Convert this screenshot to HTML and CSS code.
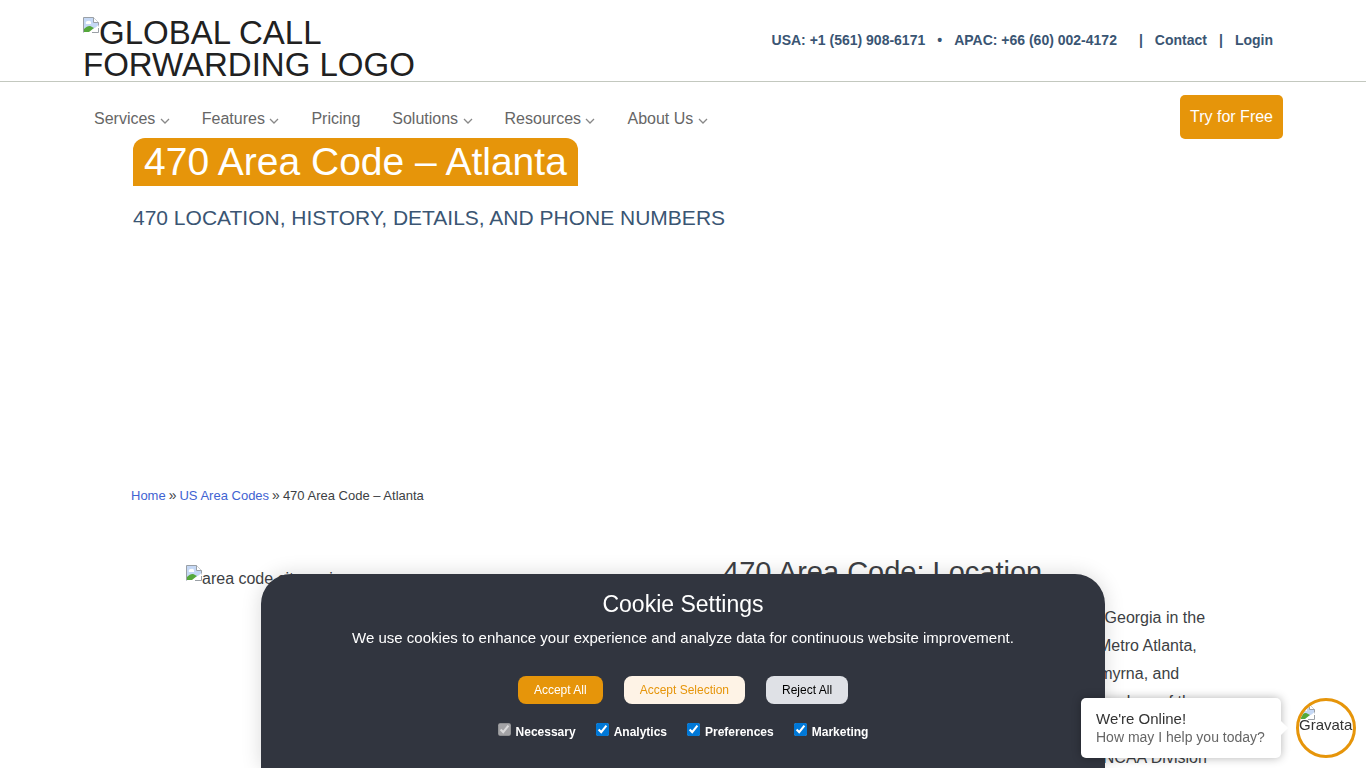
FILE: index.html
```html
<!DOCTYPE html>
<html lang="en">
<head>
<meta charset="utf-8">
<meta name="viewport" content="width=device-width, initial-scale=1">
<title>470 Area Code – Atlanta</title>
<link rel="stylesheet" href="styles.css">
</head>
<body>
<svg class="defs" width="0" height="0" aria-hidden="true">
  <symbol id="broken" viewBox="0 0 16 16">
    <path d="M.5 15.5V.5h10l5 5v4" fill="#c5d8f5" stroke="#9aa0a6"/>
    <path d="M10.500.5v5h5" fill="#fff" stroke="#9aa0a6"/>
    <path d="M3 7a2 2 0 0 1 2-3 2 2 0 0 1 3 2v1z" fill="#fff"/>
    <path d="M1 15v-3c3-3 6-4 8-2l2 1-5 4z" fill="#55a83b"/>
    <path d="M7 15.500 15.500 8v7.500z" fill="#fff"/>
    <path d="M9 15.500h6.500V11" fill="none" stroke="#9aa0a6"/>
  </symbol>
  <symbol id="chevron" viewBox="0 0 10 6">
    <path d="m1 1 4 4 4-4" fill="none" stroke="currentColor" stroke-width="1.300"/>
  </symbol>
</svg>
<header>
  <div class="topbar">
    <a class="logo" href="#"><svg class="broken"><use href="#broken"/></svg>Global Call Forwarding Logo</a>
    <div class="contacts">
      <a href="#">USA: +1 (561) 908-6171</a><span class="dot">•</span><a href="#">APAC: +66 (60) 002-4172</a><span class="bar wide">|</span><a href="#">Contact</a><span class="bar">|</span><a href="#">Login</a>
    </div>
  </div>
  <nav class="nav">
    <div class="menu">
      <a href="#">Services <svg><use href="#chevron"/></svg></a>
      <a href="#">Features <svg><use href="#chevron"/></svg></a>
      <a href="#">Pricing</a>
      <a href="#">Solutions <svg><use href="#chevron"/></svg></a>
      <a href="#">Resources <svg><use href="#chevron"/></svg></a>
      <a href="#">About Us <svg><use href="#chevron"/></svg></a>
    </div>
    <a class="try" href="#">Try for Free</a>
  </nav>
</header>
<main>
  <section class="hero">
    <h1>470 Area Code – Atlanta</h1>
    <p>470 Location, History, Details, and Phone Numbers</p>
  </section>
  <nav class="crumbs" aria-label="Breadcrumb"><a href="#">Home</a><span>»</span><a href="#">US Area Codes</a><span>»</span>470 Area Code – Atlanta</nav>
  <section class="info">
    <div class="figure"><svg class="broken"><use href="#broken"/></svg>area code city region</div>
    <div class="article">
      <h2>470 Area Code: Location</h2>
      <p>The 470 area code mainly serves the northern part of Georgia in the<br>
      United States. This area code today covers all of the Metro Atlanta,<br>
      and includes the Roswell, Sandy Springs, Marietta, Smyrna, and<br>
      Alpharetta. It is one of the four main area codes and overlays of the<br>
      city of Atlanta, with many businesses and teams<br>
      and universities that are competing in most of the top NCAA Division</p>
    </div>
  </section>
</main>
<section class="cookie" aria-labelledby="cookie-title">
  <h2 id="cookie-title">Cookie Settings</h2>
  <p>We use cookies to enhance your experience and analyze data for continuous website improvement.</p>
  <div class="actions">
    <button class="accept" type="button">Accept All</button>
    <button class="selection" type="button">Accept Selection</button>
    <button class="reject" type="button">Reject All</button>
  </div>
  <div class="options">
    <label><input type="checkbox" checked disabled>Necessary</label>
    <label><input type="checkbox" checked>Analytics</label>
    <label><input type="checkbox" checked>Preferences</label>
    <label><input type="checkbox" checked>Marketing</label>
  </div>
</section>
<aside class="chat">
  <div class="bubble"><strong>We're Online!</strong><span>How may I help you today?</span></div>
  <button class="avatar" type="button"><svg class="broken"><use href="#broken"/></svg><span>Gravatar</span></button>
</aside>
</body>
</html>
```
FILE: styles.css
```css
* { box-sizing: border-box; }
body {
  margin: 0;
  font: 16px/28px "Liberation Sans", Arial, sans-serif;
  color: #3d3f44;
  background: #fff;
  overflow-x: hidden;
}
h1, h2, p { margin: 0; font-weight: 400; }
a { text-decoration: none; color: inherit; }
.defs { position: absolute; }
.broken { width: 16px; height: 16px; flex: none; vertical-align: top; }

.topbar {
  display: flex;
  justify-content: space-between;
  min-height: 82px;
  padding: 17px 93px 0 83px;
  border-bottom: 1px solid #c3c8bf;
}
.logo {
  width: 340px;
  font-size: 33px;
  line-height: 32px;
  text-transform: uppercase;
  color: #212121;
}
.contacts {
  display: flex;
  align-items: center;
  height: 46px;
  font-size: 14px;
  font-weight: 700;
  color: #3a5573;
}
.contacts .dot { margin: 0 12px; }
.contacts .bar { margin: 0 12px; }
.contacts .bar.wide { margin-left: 22px; }

.nav {
  display: flex;
  justify-content: space-between;
  height: 56px;
  padding: 13px 83px 0 94px;
}
.menu { display: flex; gap: 32px; line-height: 47px; color: #666; }
.menu svg { width: 10px; height: 6px; color: #888; }
.try {
  height: 44px;
  padding: 0 10px;
  border-radius: 5px;
  line-height: 44px;
  color: #fff;
  background: #e6950a;
}

.hero {
  min-height: 345px;
  padding: 0 133px;
}
.hero h1 {
  display: inline-block;
  padding: 0 11px;
  border-radius: 12px 12px 0 0;
  font-size: 39px;
  line-height: 48px;
  vertical-align: top;
  color: #fff;
  background: #e6950a;
}
.hero p {
  margin-top: 18px;
  font-size: 21px;
  text-transform: uppercase;
  color: #3a5573;
}
.crumbs {
  padding: 0 131px;
  font-size: 13px;
  line-height: 24px;
}
.crumbs a { color: #3f63d2; }
.crumbs span { margin: 0 3px; font-size: 14px; }

.info {
  display: grid;
  grid-template-columns: 537px 1fr;
  padding: 49px 133px 0 186px;
}
.figure { margin-top: 8px; }
.article h2 { font-size: 29px; line-height: 30px; }
.article p { margin-top: 17px; white-space: nowrap; }

.cookie {
  position: fixed;
  bottom: 0;
  left: 50%;
  width: 844px;
  max-width: 100%;
  padding: 16px 20px 24px;
  border-radius: 30px 30px 0 0;
  text-align: center;
  color: #fff;
  background: #31353f;
  box-shadow: 0 0 20px rgba(0, 0, 0, .15);
  transform: translateX(-50%);
}
.cookie h2 { font-size: 23px; line-height: 28px; }
.cookie p { margin-top: 10px; font-size: 15px; line-height: 20px; }
.actions { display: flex; justify-content: center; gap: 21px; margin-top: 28px; }
.actions button {
  height: 28px;
  padding: 0 16px;
  border: 0;
  border-radius: 8px;
  font: 12px "Liberation Sans", Arial, sans-serif;
}
.actions .accept { color: #fff; background: #e6950a; }
.actions .selection { color: #e6950a; background: #fef3e6; }
.actions .reject { color: #000; background: #dfe1e6; }
.options {
  display: flex;
  justify-content: center;
  gap: 20px;
  margin-top: 16px;
  font-size: 12px;
  font-weight: 700;
  line-height: 24px;
}
.options label { display: flex; }
.options input { width: 13px; height: 13px; margin: 3px 5px 0 0; accent-color: #0078d7; }

.chat {
  position: fixed;
  right: 10px;
  bottom: 10px;
  display: flex;
  gap: 15px;
}
.bubble {
  position: relative;
  width: 200px;
  padding: 12px 15px;
  border-radius: 5px;
  line-height: 18px;
  background: #fff;
  box-shadow: 0 0 10px rgba(0, 0, 0, .3);
}
.bubble::after {
  content: "";
  position: absolute;
  top: 25px;
  right: -5px;
  width: 10px;
  height: 10px;
  background: #fff;
  transform: rotate(45deg);
}
.bubble strong { display: block; font-size: 15px; font-weight: 400; color: #333; }
.bubble span { display: block; font-size: 14px; white-space: nowrap; color: #666; }
.avatar {
  display: flex;
  flex-direction: column;
  justify-content: flex-start;
  width: 60px;
  height: 60px;
  padding: 3px 0 0;
  border: 3px solid #e6950a;
  border-radius: 50%;
  overflow: hidden;
  font: 15px/16px "Liberation Sans", Arial, sans-serif;
  text-align: left;
  color: #333;
  background: #fff;
}
.avatar span { margin-top: -3px; white-space: nowrap; }
```
